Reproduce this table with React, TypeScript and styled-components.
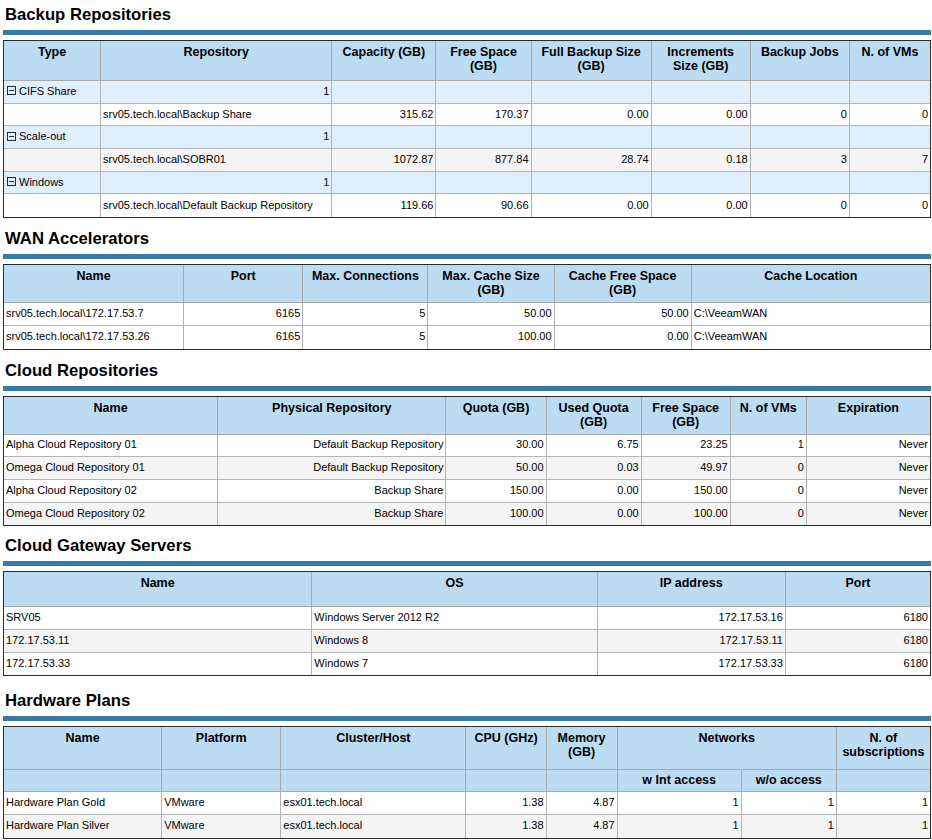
import React from "react";
import styled, {createGlobalStyle} from "styled-components";

const GlobalStyle = createGlobalStyle`
  body {
    margin: 0;
    background: #ffffff;
    color: #000000;
    font-family: "Liberation Sans", Arial, sans-serif;
  }
`;

const StyledPage = styled.div`
  padding: 0 1px 0 3px;
`;

const StyledSection = styled.section<{$gap: number}>`
  padding-top: ${p => p.$gap}px;
`;

const StyledTitle = styled.h2`
  margin: 0 0 5px 2px;
  font-size: 16.7px;
  line-height: 20px;
  font-weight: bold;
  color: #000;
`;

const StyledBar = styled.div`
  width: 928px;
  height: 5px;
  background: #377aa6;
  margin-bottom: 5px;
`;

const StyledTable = styled.table`
  width: 928px;
  table-layout: fixed;
  border-collapse: separate;
  border-spacing: 0;
  border: 1px solid #2b2b2b;
  font-size: 11px;
  line-height: 14px;

  tr > *:last-child {
    border-right: none;
  }

  tbody tr:last-child > * {
    border-bottom: none;
  }
`;

const StyledHeadRow = styled.tr<{$h?: number}>`
  height: ${p => p.$h || 35}px;
`;

const StyledHeadCell = styled.th<{$sub?: boolean}>`
  background: #bcdcf4;
  border-right: 1px solid #a9a9a9;
  border-bottom: 1px solid #a9a9a9;
  padding: ${p => (p.$sub ? "3px 3px 2px" : "4px 3px 3px")};
  vertical-align: top;
  text-align: center;
  font-size: 12.5px;
  font-weight: bold;
  line-height: 14px;
  color: #000;
`;

const StyledRow = styled.tr<{$tone: "plain" | "alt" | "group"}>`
  height: 22.7px;
  background: ${p => (p.$tone === "group" ? "#dff0fc" : p.$tone === "alt" ? "#f4f4f4" : "#ffffff")};
`;

const StyledCell = styled.td<{$align?: "left" | "right"}>`
  border-right: 1px solid #b4b4b4;
  border-bottom: 1px solid #b4b4b4;
  padding: 0 2px 2px;
  text-align: ${p => p.$align || "left"};
  vertical-align: middle;
  white-space: nowrap;
  overflow: hidden;
`;

const StyledGroupLabel = styled.span`
  display: flex;
  align-items: center;
  gap: 3px;
  padding-left: 1px;
`;

function MinusBox() {
    return (
        <svg width="9" height="9" viewBox="0 0 9 9">
            <rect x="0.5" y="0.5" width="8" height="8" fill="none" stroke="#2a2a2a" />
            <path d="M2 4.5h5" stroke="#2a2a2a" />
        </svg>
    );
}

function Cols({edges}: {edges: number[]}) {
    const last = edges.length - 2;
    return (
        <colgroup>
            {edges.slice(1).map((e, i) => (
                <col key={i} width={e - edges[i] - (i === last ? 1 : 0) - (i === 0 ? 1 : 0)} />
            ))}
        </colgroup>
    );
}

type Align = "left" | "right";

interface SimpleTableProps {
    edges: number[];
    heads: string[];
    aligns: Align[];
    rows: string[][];
    headHeight?: number;
    striped?: boolean;
}

function SimpleTable({edges, heads, aligns, rows, headHeight, striped = true}: SimpleTableProps) {
    return (
        <StyledTable>
            <Cols edges={edges} />
            <thead>
            <StyledHeadRow $h={headHeight}>
                {heads.map(h => <StyledHeadCell key={h}>{h}</StyledHeadCell>)}
            </StyledHeadRow>
            </thead>
            <tbody>
            {rows.map((r, i) => (
                <StyledRow key={i} $tone={striped && i % 2 === 1 ? "alt" : "plain"}>
                    {r.map((c, j) => <StyledCell key={j} $align={aligns[j]}>{c}</StyledCell>)}
                </StyledRow>
            ))}
            </tbody>
        </StyledTable>
    );
}

const repoGroups = [
    {label: "CIFS Share", rows: [["srv05.tech.local\\Backup Share", "315.62", "170.37", "0.00", "0.00", "0", "0"]]},
    {label: "Scale-out", rows: [["srv05.tech.local\\SOBR01", "1072.87", "877.84", "28.74", "0.18", "3", "7"]]},
    {label: "Windows", rows: [["srv05.tech.local\\Default Backup Repository", "119.66", "90.66", "0.00", "0.00", "0", "0"]]},
];

const repoHeads = ["Type", "Repository", "Capacity (GB)", "Free Space (GB)", "Full Backup Size (GB)", "Increments Size (GB)", "Backup Jobs", "N. of VMs"];

function BackupRepositories() {
    let n = 0;
    return (
        <StyledTable>
            <Cols edges={[3, 101, 332, 436, 531, 651, 750, 849, 930]} />
            <thead>
            <StyledHeadRow $h={40}>
                {repoHeads.map(h => <StyledHeadCell key={h}>{h}</StyledHeadCell>)}
            </StyledHeadRow>
            </thead>
            <tbody>
            {repoGroups.map(g => (
                <React.Fragment key={g.label}>
                    <StyledRow $tone="group">
                        <StyledCell>
                            <StyledGroupLabel><MinusBox />{g.label}</StyledGroupLabel>
                        </StyledCell>
                        <StyledCell $align="right">{g.rows.length}</StyledCell>
                        {repoHeads.slice(2).map(h => <StyledCell key={h} />)}
                    </StyledRow>
                    {g.rows.map((r, i) => (
                        <StyledRow key={i} $tone={n++ % 2 === 1 ? "alt" : "plain"}>
                            <StyledCell />
                            {r.map((c, j) => <StyledCell key={j} $align={j === 0 ? "left" : "right"}>{c}</StyledCell>)}
                        </StyledRow>
                    ))}
                </React.Fragment>
            ))}
            </tbody>
        </StyledTable>
    );
}

function HardwarePlans() {
    const rows = [
        ["Hardware Plan Gold", "VMware", "esx01.tech.local", "1.38", "4.87", "1", "1", "1"],
        ["Hardware Plan Silver", "VMware", "esx01.tech.local", "1.38", "4.87", "1", "1", "1"],
    ];
    return (
        <StyledTable>
            <Cols edges={[3, 162, 281, 466, 546, 617, 741, 836, 930]} />
            <thead>
            <StyledHeadRow $h={43}>
                <StyledHeadCell>Name</StyledHeadCell>
                <StyledHeadCell>Platform</StyledHeadCell>
                <StyledHeadCell>Cluster/Host</StyledHeadCell>
                <StyledHeadCell>CPU (GHz)</StyledHeadCell>
                <StyledHeadCell>Memory (GB)</StyledHeadCell>
                <StyledHeadCell colSpan={2}>Networks</StyledHeadCell>
                <StyledHeadCell>N. of subscriptions</StyledHeadCell>
            </StyledHeadRow>
            <StyledHeadRow $h={22}>
                <StyledHeadCell $sub />
                <StyledHeadCell $sub />
                <StyledHeadCell $sub />
                <StyledHeadCell $sub />
                <StyledHeadCell $sub />
                <StyledHeadCell $sub>w Int access</StyledHeadCell>
                <StyledHeadCell $sub>w/o access</StyledHeadCell>
                <StyledHeadCell $sub />
            </StyledHeadRow>
            </thead>
            <tbody>
            {rows.map((r, i) => (
                <StyledRow key={i} $tone={i % 2 === 1 ? "alt" : "plain"}>
                    {r.map((c, j) => <StyledCell key={j} $align={j < 3 ? "left" : "right"}>{c}</StyledCell>)}
                </StyledRow>
            ))}
            </tbody>
        </StyledTable>
    );
}

export default function App() {
    return (
        <StyledPage>
            <GlobalStyle />
            <StyledSection $gap={5}>
                <StyledTitle>Backup Repositories</StyledTitle>
                <StyledBar />
                <BackupRepositories />
            </StyledSection>

            <StyledSection $gap={11}>
                <StyledTitle>WAN Accelerators</StyledTitle>
                <StyledBar />
                <SimpleTable
                    edges={[3, 184, 303, 428, 554, 691, 930]}
                    heads={["Name", "Port", "Max. Connections", "Max. Cache Size (GB)", "Cache Free Space (GB)", "Cache Location"]}
                    aligns={["left", "right", "right", "right", "right", "left"]}
                    headHeight={38}
                    striped={false}
                    rows={[
                        ["srv05.tech.local\\172.17.53.7", "6165", "5", "50.00", "50.00", "C:\\VeeamWAN"],
                        ["srv05.tech.local\\172.17.53.26", "6165", "5", "100.00", "0.00", "C:\\VeeamWAN"],
                    ]}
                />
            </StyledSection>

            <StyledSection $gap={11}>
                <StyledTitle>Cloud Repositories</StyledTitle>
                <StyledBar />
                <SimpleTable
                    edges={[3, 218, 446, 546, 641, 730, 806, 930]}
                    heads={["Name", "Physical Repository", "Quota (GB)", "Used Quota (GB)", "Free Space (GB)", "N. of VMs", "Expiration"]}
                    aligns={["left", "right", "right", "right", "right", "right", "right"]}
                    headHeight={38}
                    rows={[
                        ["Alpha Cloud Repository 01", "Default Backup Repository", "30.00", "6.75", "23.25", "1", "Never"],
                        ["Omega Cloud Repository 01", "Default Backup Repository", "50.00", "0.03", "49.97", "0", "Never"],
                        ["Alpha Cloud Repository 02", "Backup Share", "150.00", "0.00", "150.00", "0", "Never"],
                        ["Omega Cloud Repository 02", "Backup Share", "100.00", "0.00", "100.00", "0", "Never"],
                    ]}
                />
            </StyledSection>

            <StyledSection $gap={10}>
                <StyledTitle>Cloud Gateway Servers</StyledTitle>
                <StyledBar />
                <SimpleTable
                    edges={[3, 312, 597, 785, 930]}
                    heads={["Name", "OS", "IP address", "Port"]}
                    aligns={["left", "left", "right", "right"]}
                    rows={[
                        ["SRV05", "Windows Server 2012 R2", "172.17.53.16", "6180"],
                        ["172.17.53.11", "Windows 8", "172.17.53.11", "6180"],
                        ["172.17.53.33", "Windows 7", "172.17.53.33", "6180"],
                    ]}
                />
            </StyledSection>

            <StyledSection $gap={15}>
                <StyledTitle>Hardware Plans</StyledTitle>
                <StyledBar />
                <HardwarePlans />
            </StyledSection>
        </StyledPage>
    );
}
